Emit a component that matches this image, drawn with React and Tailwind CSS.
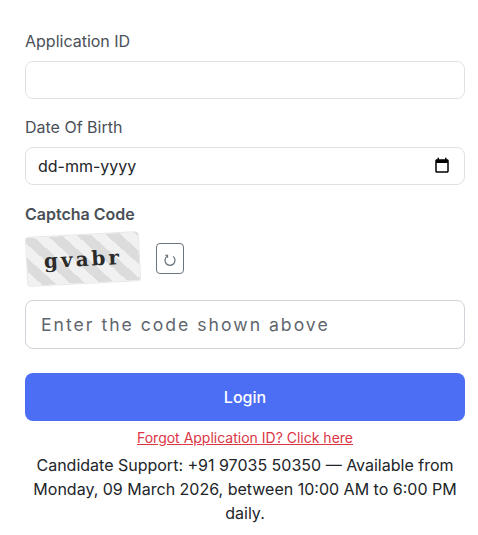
const INTER = "font-['Inter',sans-serif]";

function CalendarIcon() {
  return (
    <svg viewBox="0 0 24 24" className="h-[18px] w-[18px] shrink-0" fill="#000">
      <path d="M19 3h-1V1h-2v2H8V1H6v2H5c-1.11 0-1.99.9-1.99 2L3 19c0 1.1.89 2 2 2h14c1.1 0 2-.9 2-2V5c0-1.1-.9-2-2-2zm0 16H5V8h14v11z" />
    </svg>
  );
}

function RefreshIcon() {
  return (
    <svg viewBox="0 0 12 12" className="mt-[2px] h-[14px] w-[14px]" fill="none" stroke="#5f6b76" strokeWidth="1">
      <path d="M8.6 2.9A4.3 4.3 0 1 1 3.4 2.9" />
      <path d="M1.8 1.9H3.9V4" />
    </svg>
  );
}

export default function App() {
  return (
    <div className={`${INTER} h-[535px] w-[478px] overflow-hidden bg-white pl-[25px] pr-[13px] pt-[30px] text-[#212529]`}>
      <form onSubmit={(e) => e.preventDefault()}>
        <div className="mb-[17px]">
          <label className="mb-[9px] block text-base leading-[22px] text-[#495057]">Application ID</label>
          <input type="text" className="block h-[38px] w-full rounded-lg border border-[#dee2e6] bg-white px-3 text-base outline-none" />
        </div>

        <div className="mb-[18px]">
          <label className="mb-[9px] block text-base leading-[22px] text-[#495057]">Date Of Birth</label>
          <div className="flex h-[38px] w-full items-center rounded-lg border border-[#dee2e6] bg-white pl-3 pr-[13px]">
            <input type="text" defaultValue="dd-mm-yyyy" className="min-w-0 flex-1 bg-transparent text-base text-[#212529] outline-none" />
            <CalendarIcon />
          </div>
        </div>

        <label className="mb-[6px] block text-base font-semibold leading-[22px] text-[#495057]">Captcha Code</label>
        <div className="mb-[13px] flex h-[56px] items-center gap-4">
          <div className="ml-px flex h-[50px] w-[114px] -rotate-3 items-center justify-center rounded border border-[#e5e7eb] bg-[repeating-linear-gradient(45deg,#f1f1f1,#f1f1f1_10px,#dcdcdc_10px,#dcdcdc_20px)]">
            <span className="font-['DejaVu_Serif',serif] text-[20px] font-bold tracking-[3px] text-[#2b2b2b]">gvabr</span>
          </div>
          <button type="button" aria-label="Refresh captcha" className="-mt-[1px] flex h-[31px] w-[28px] items-center justify-center rounded border border-[#6c757d] bg-white">
            <RefreshIcon />
          </button>
        </div>

        <input
          type="text"
          placeholder="Enter the code shown above"
          className="mb-6 block h-[49px] w-full rounded-lg border border-[#ced4da] bg-white px-[15px] text-[17.6px] tracking-[2px] outline-none placeholder:text-[#5f666d]"
        />

        <button type="submit" className="block h-12 w-full rounded-lg bg-[#4c6ef5] text-base font-medium text-white">Login</button>

        <div className="mt-2 text-center text-sm leading-[17px]">
          <a href="#" className="text-[#dc3545] underline">Forgot Application ID? Click here</a>
        </div>
        <p className="mt-[7px] text-center text-base leading-6">
          Candidate Support: +91 97035 50350 — Available from Monday, 09 March 2026, between 10:00 AM to 6:00 PM daily.
        </p>
      </form>
    </div>
  );
}
